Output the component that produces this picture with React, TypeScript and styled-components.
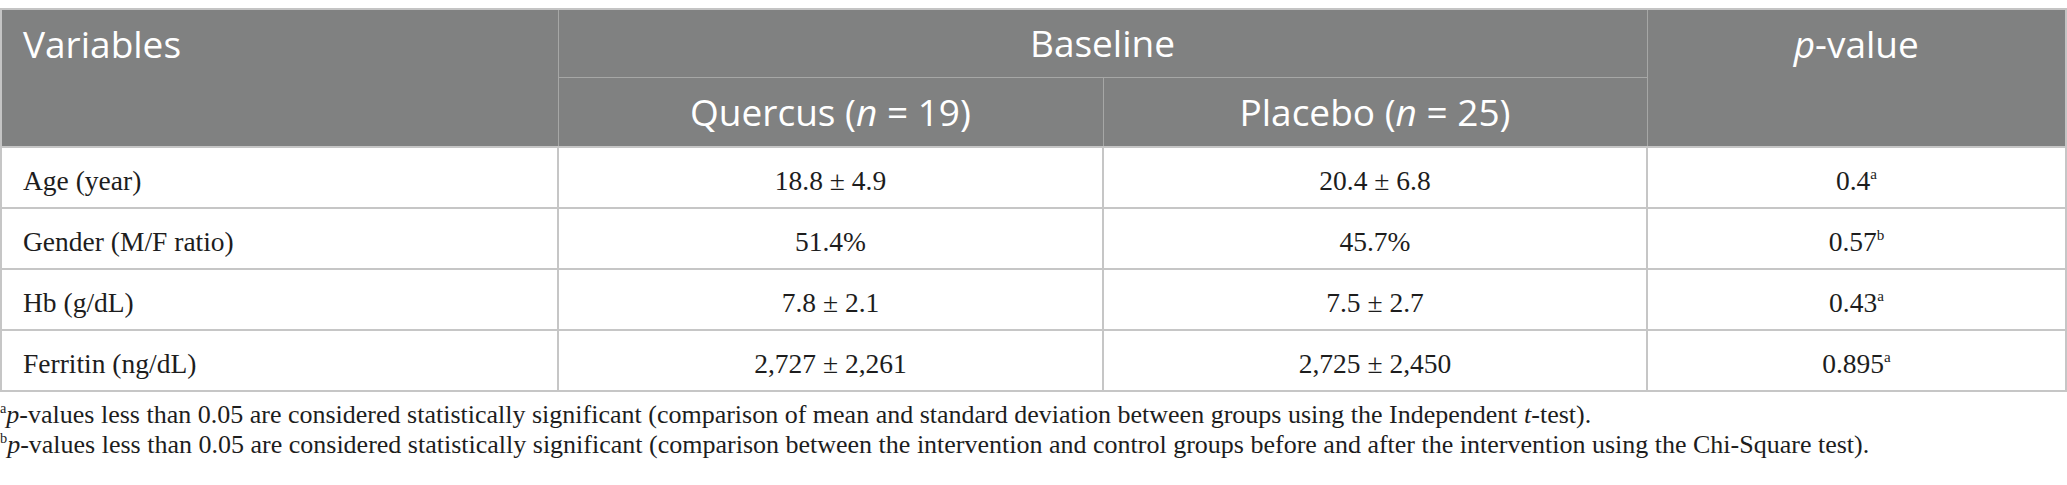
import styled, { createGlobalStyle } from 'styled-components'

const GlobalStyle = createGlobalStyle`
  body {
    margin: 8px 0 0;
    background: #ffffff;
  }
`

const Table = styled.table`
  width: 100%;
  border-collapse: collapse;
  table-layout: fixed;
  border: 2px solid #c4c4c4;
`

const Col = styled.col<{ $width?: number }>`
  width: ${p => (p.$width ? `${p.$width}px` : 'auto')};
`

const HeadCell = styled.th<{ $align?: 'left' | 'center'; $top?: boolean; $height?: number }>`
  background: #808181;
  color: #ffffff;
  font-family: 'Open Sans', 'Noto Sans', sans-serif;
  font-size: 37px;
  font-weight: 400;
  line-height: 50px;
  text-align: ${p => p.$align ?? 'center'};
  vertical-align: ${p => (p.$top ? 'top' : 'middle')};
  border: 1px solid #a6a7a6;
  padding: ${p => (p.$top ? '9px 21px 0' : '0 21px')};
  height: ${p => p.$height ?? 68}px;
  box-sizing: border-box;
`

const Cell = styled.td<{ $align?: 'left' | 'center' }>`
  font-family: 'Liberation Serif', 'Times New Roman', serif;
  font-size: 27.5px;
  line-height: 31px;
  color: #1d1d1d;
  text-align: ${p => p.$align ?? 'center'};
  vertical-align: middle;
  border: 2px solid #c6c6c6;
  padding: 5px 21px 0;
  height: 61px;
  box-sizing: border-box;
`

const Sup = styled.sup`
  font-size: 0.55em;
  line-height: 0;
  vertical-align: 0.7em;
`

const Notes = styled.div`
  padding-top: 8px;
  font-family: 'Liberation Serif', 'Times New Roman', serif;
  font-size: 26px;
  line-height: 30px;
  color: #1d1d1d;
`

const Note = styled.p`
  margin: 0;
`

const rows = [
  { label: 'Age (year)', quercus: '18.8 ± 4.9', placebo: '20.4 ± 6.8', p: '0.4', mark: 'a' },
  { label: 'Gender (M/F ratio)', quercus: '51.4%', placebo: '45.7%', p: '0.57', mark: 'b' },
  { label: 'Hb (g/dL)', quercus: '7.8 ± 2.1', placebo: '7.5 ± 2.7', p: '0.43', mark: 'a' },
  { label: 'Ferritin (ng/dL)', quercus: '2,727 ± 2,261', placebo: '2,725 ± 2,450', p: '0.895', mark: 'a' },
]

export default function App() {
  return (
    <>
      <GlobalStyle />
      <Table>
        <colgroup>
          <Col $width={557} />
          <Col $width={545} />
          <Col $width={544} />
          <Col />
        </colgroup>
        <thead>
          <tr>
            <HeadCell rowSpan={2} $align="left" $top>
              Variables
            </HeadCell>
            <HeadCell colSpan={2} $height={68}>
              Baseline
            </HeadCell>
            <HeadCell rowSpan={2} $top>
              <i>p</i>-value
            </HeadCell>
          </tr>
          <tr>
            <HeadCell $height={70}>
              Quercus (<i>n</i> = 19)
            </HeadCell>
            <HeadCell $height={70}>
              Placebo (<i>n</i> = 25)
            </HeadCell>
          </tr>
        </thead>
        <tbody>
          {rows.map(row => (
            <tr key={row.label}>
              <Cell $align="left">{row.label}</Cell>
              <Cell>{row.quercus}</Cell>
              <Cell>{row.placebo}</Cell>
              <Cell>
                {row.p}
                <Sup>{row.mark}</Sup>
              </Cell>
            </tr>
          ))}
        </tbody>
      </Table>
      <Notes>
        <Note>
          <Sup>a</Sup>
          <i>p</i>-values less than 0.05 are considered statistically significant (comparison of mean and standard
          deviation between groups using the Independent <i>t</i>-test).
        </Note>
        <Note>
          <Sup>b</Sup>
          <i>p</i>-values less than 0.05 are considered statistically significant (comparison between the
          intervention and control groups before and after the intervention using the Chi-Square test).
        </Note>
      </Notes>
    </>
  )
}
